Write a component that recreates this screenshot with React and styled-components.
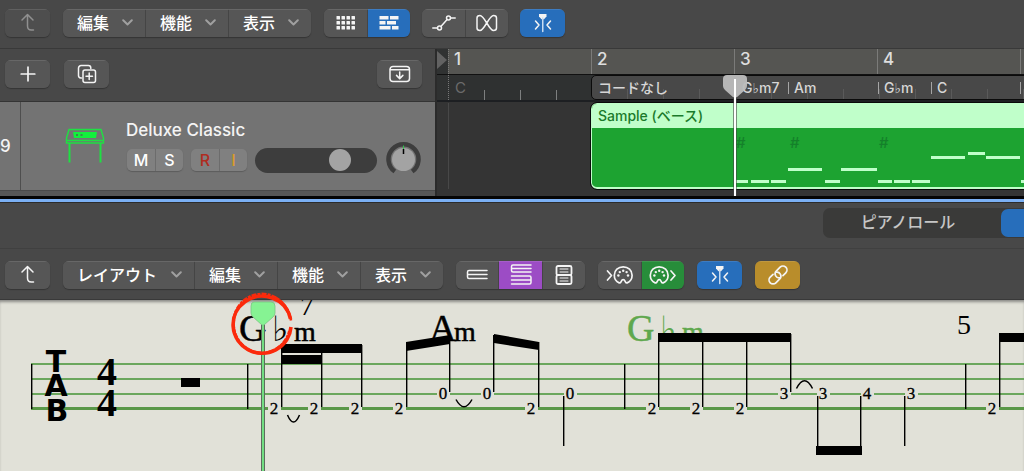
import React from 'react';
import styled, { createGlobalStyle, css } from 'styled-components';

const Global = createGlobalStyle`
  *, *::before, *::after { box-sizing: border-box; }
  body {
    margin: 0;
    background: #484848;
    color: #f4f4f4;
    font-family: Inter, "Noto Sans CJK JP", sans-serif;
  }
  button { font: inherit; color: inherit; border: 0; padding: 0; margin: 0; }
  svg { display: block; }
`;

const TONES = {
  plain: '#565656',
  blue: '#276ebb',
  purple: '#9c4cc5',
  green: '#278d3a',
  gold: '#b98d2b',
};

const Window = styled.main`
  display: flex;
  flex-direction: column;
  min-height: 100vh;
  overflow: hidden;
`;

/* ---------- toolbars ---------- */

const Toolbar = styled.header`
  display: flex;
  align-items: flex-start;
  gap: ${(p) => p.$gap}px;
  height: ${(p) => p.$height}px;
  padding: ${(p) => p.$top}px 5px 0;
  background: #484848;
  border-bottom: 1px solid #393939;
`;

const Group = styled.div`
  display: flex;
  gap: 1px;
  flex: none;
  margin: 0 ${(p) => (p.$spaced ? 1 : 0)}px;
  border-radius: 6px;
  overflow: hidden;
  background: #454545;
  box-shadow: 0 1px 1px #353535, inset 0 1px 0 #636363;
`;

const ToolButton = styled.button`
  display: flex;
  align-items: center;
  justify-content: center;
  width: ${(p) => p.$width || 45}px;
  height: 28px;
  background: ${(p) => TONES[p.$tone || 'plain']};
  box-shadow: inset 0 1px 0 rgba(255, 255, 255, 0.1);
  &:disabled { background: #4e4e4e; color: #909090; }
`;

const MenuButton = styled.button`
  display: flex;
  align-items: center;
  justify-content: space-between;
  width: ${(p) => (p.$wide ? 131 : 82)}px;
  height: 28px;
  padding: 0 12px 2px 14px;
  background: ${TONES.plain};
  box-shadow: inset 0 1px 0 rgba(255, 255, 255, 0.1);
  font-family: "Noto Sans CJK JP", sans-serif;
  font-size: 16px;
  font-weight: 500;
  line-height: 24px;
  color: #fff;
  white-space: nowrap;
`;

function Icon({ w = 24, h = 24, children, sw = 1.5 }) {
  return (
    <svg width={w} height={h} viewBox={`0 0 ${w} ${h}`} fill="none" stroke="currentColor"
      strokeWidth={sw} strokeLinecap="round" strokeLinejoin="round" aria-hidden="true">
      {children}
    </svg>
  );
}

const Chevron = () => (
  <Icon w={11} h={8} sw={2}><path d="M1.2 2.300 5.5 6.500 9.8 2.300" stroke="#a0a0a0" /></Icon>
);

const Menu = ({ label, wide }) => (
  <MenuButton $wide={wide}>{label}<Chevron /></MenuButton>
);

const UpIcon = () => (
  <Icon><path d="M6 9 11.500 3.500l5.500 5.500M11.500 3.700V15q0 4 3.800 4H17.500" /></Icon>
);
const PlusIcon = () => <Icon sw={1.7}><path d="M12 5.2v13.6M5.2 12h13.6" /></Icon>;
const DuplicateIcon = () => (
  <Icon>
    <path d="M6.5 16H5.8A2.4 2.4 0 0 1 3.5 13.6V6.2A2.6 2.6 0 0 1 6.1 3.600h7.300A2.400 2.400 0 0 1 15.800 6v.4" />
    <rect x="8" y="8" width="12.500" height="12.500" rx="2" />
    <path d="M14.200 11v6.500M11 14.200h6.500" />
  </Icon>
);
const DropIcon = () => (
  <Icon>
    <rect x="2" y="4.500" width="19.500" height="15" rx="3" />
    <path d="M2.500 7.800h18.500M11.700 10v6.400M8.500 13.400l3.200 3.200 3.200-3.200" />
  </Icon>
);
const DotsIcon = () => (
  <Icon>
    <g fill="currentColor" stroke="none">
      {[5, 10, 15].flatMap((y) => [2, 7, 12, 17].map((x) => (
        <rect key={`${x}-${y}`} x={x + 0.5} y={y} width="3.500" height="3.500" rx="0.600" />
      )))}
    </g>
  </Icon>
);
const BricksIcon = () => (
  <Icon>
    <g fill="currentColor" stroke="none">
      <rect x="2.500" y="5" width="9" height="3.500" /><rect x="13" y="5" width="8.500" height="3.500" />
      <rect x="2.500" y="10" width="6" height="3.500" /><rect x="10" y="10" width="9" height="3.500" />
      <rect x="2.500" y="15" width="11" height="3.500" /><rect x="15" y="15" width="6.500" height="3.500" />
    </g>
  </Icon>
);
const AutomationIcon = () => (
  <Icon>
    <circle cx="7.500" cy="17" r="2" /><circle cx="16.500" cy="7" r="2" />
    <path d="M.8 17h4.700M8.900 15.500l6.200-7M18.500 7h4.700" />
  </Icon>
);
const FlexIcon = () => (
  <Icon>
    <path d="M5 4.500C9.500 4.500 14 19.500 18.500 19.500 20.500 19.500 21.500 18.500 21.500 17V7C21.500 5.500 20.500 4.500 18.500 4.500 14 4.500 9.500 19.500 5 19.500 3 19.500 2 18.500 2 17V7C2 5.500 3 4.500 5 4.500Z" />
  </Icon>
);
const CatchIcon = () => (
  <Icon>
    <path d="M8 3h7.500v2.600l-2.500 2.600h-2.500L8 5.600Z" fill="currentColor" stroke="none" />
    <path d="M11.750 7v13.500" stroke="#c8dcf2" />
    <path d="m4.500 10 3.500 4-3.500 4M19.500 10 16 14l3.500 4" />
  </Icon>
);
const LinearIcon = () => (
  <Icon><path d="M22 7.500H4Q2.500 7.500 2.500 9V14Q2.500 15.500 4 15.500H22M3 11.500h19" /></Icon>
);
const WrappedIcon = () => (
  <Icon>
    <path d="M22 2H4Q2.500 2 2.500 3.500V7.500Q2.500 9 4 9H22M3 5.500H22M2.500 13H20.500Q22 13 22 14.500V19.500Q22 21 20.500 21H2.500M2.500 17H21.500" />
  </Icon>
);
const PageIcon = () => (
  <Icon sw={1.800}>
    <rect x="4.500" y="3" width="15" height="9" rx="1.500" />
    <rect x="4.500" y="12" width="15" height="9" rx="1.500" />
    <path d="M8 6h8M8 9h8M8 15h8M8 18h8" strokeWidth="1" />
  </Icon>
);
const Midi = () => (
  <>
    <path d="M6.200 19.400C2.800 18 1.300 15 1.300 11.800 1.300 6.800 5.200 3.400 10.200 3.400s8.900 3.400 8.900 8.400c0 3.200-1.500 6.200-4.900 7.600-2.200.7-1.600-3.200-4-3.200s-1.800 3.900-4 3.200Z" />
    <g fill="currentColor" stroke="none">
      <circle cx="5.400" cy="12" r="1.200" /><circle cx="6.800" cy="8.600" r="1.200" />
      <circle cx="10.200" cy="7.200" r="1.200" /><circle cx="13.600" cy="8.600" r="1.200" />
      <circle cx="15" cy="12" r="1.200" />
    </g>
  </>
);
const MidiInIcon = () => (
  <Icon w={28} h={24} sw={1.7}><path d="m1.500 8 4 4.500-4 4.500" /><g transform="translate(7 0.500)"><Midi /></g></Icon>
);
const MidiOutIcon = () => (
  <Icon w={28} h={24} sw={1.7}><g transform="translate(0 0.500)"><Midi /></g><path d="m22 8 4 4.500-4 4.500" /></Icon>
);
const LinkIcon = () => (
  <Icon sw={1.7}>
    <g transform="rotate(-45 12 12)">
      <path d="M12.500 8.600A4 4 0 0 1 10.500 16H5A4 4 0 0 1 5 8H9" />
      <path d="M11.500 15.400A4 4 0 0 1 13.500 8H19A4 4 0 0 1 19 16H15" />
    </g>
  </Icon>
);

/* ---------- track area ---------- */

const Arrange = styled.section`
  display: flex;
  height: 147px;
`;

const TrackPane = styled.div`
  display: flex;
  flex-direction: column;
  flex: none;
  width: 437px;
  border-right: 2px solid #2b2b2b;
`;

const TrackTools = styled.div`
  display: flex;
  gap: 14px;
  height: 53px;
  padding: 11px 13px 0 5px;
  border-bottom: 1px solid #343434;
  & > :last-child { margin-left: auto; }
`;

const TrackRow = styled.div`
  display: flex;
  height: 88px;
  background: #737373;
`;

const TrackNumber = styled.div`
  width: 21px;
  border-right: 1px solid #4e4e4e;
  font-size: 17px;
  font-weight: 500;
  line-height: 88px;
`;

const TrackIcon = styled.div`
  width: 105px;
  padding: 25px 0 0 43px;
`;

const TrackBody = styled.div`
  display: flex;
  flex-direction: column;
  gap: 5px;
  padding-top: 17px;
`;

const TrackName = styled.div`
  font-size: 17px;
  font-weight: 500;
  line-height: 22px;
`;

const Controls = styled.div`
  display: flex;
  align-items: center;
  gap: 8px;
  height: 28px;
`;

const Pair = styled.div`
  display: flex;
  gap: 1px;
  margin-left: 1px;
  border-radius: 5px;
  overflow: hidden;
  background: #6c6c6c;
  box-shadow: 0 1px 1px #5c5c5c;
  & + & { margin-left: 0; }
`;

const TrackToggle = styled.button`
  width: ${(p) => (p.$narrow ? 27 : 28)}px;
  height: 22px;
  background: #808080;
  color: ${(p) => p.$color || '#fff'};
  font-size: 16px;
  font-weight: 500;
  line-height: 22px;
`;

const Volume = styled.input`
  appearance: none;
  width: 122px;
  height: 25px;
  margin: 0;
  border-radius: 13px;
  background: #3d3d3d;
  &::-webkit-slider-thumb {
    appearance: none;
    width: 22px;
    height: 22px;
    border-radius: 50%;
    background: #a3a3a3;
  }
`;

const Pan = styled.label`
  position: relative;
  width: 36px;
  height: 36px;
  input { position: absolute; inset: 0; width: 100%; margin: 0; opacity: 0; }
`;

const PaneEnd = styled.div`
  flex: 1;
  background: #575757;
  border-top: 1px solid #4a4a4a;
`;

const Timeline = styled.div`
  position: relative;
  display: flex;
  flex-direction: column;
  flex: 1;
  min-width: 0;
  overflow: hidden;
  background: #343434;
`;

const Ruler = styled.div`
  display: grid;
  grid-template-columns: 11px repeat(12, 143px);
  height: 26px;
  background: #555552;
  border-bottom: 1px solid #111;
`;

const RulerStart = styled.div`
  background: #303232;
  padding-top: 2px;
`;

const Bar = styled.div`
  padding: 2px 0 0 5px;
  border-left: 1px ${(p) => (p.$first ? 'dotted' : 'solid')} #7b7b79;
  font-size: 17px;
  font-weight: 500;
  line-height: 17px;
  color: #dedede;
`;

const ticks = css`
  background-image: repeating-linear-gradient(90deg, transparent 0 35px, ${(p) => p.$tick} 35px 36px);
  background-size: 100% 10px;
  background-position: 0 100%;
  background-repeat: no-repeat;
`;

const ChordRow = styled.div`
  display: flex;
  height: 27px;
  background: #2f3131;
  border-bottom: 2px solid #1d1f22;
`;

const KeyCell = styled.div`
  ${ticks}
  width: 143px;
  margin-left: 11px;
  padding-left: 6px;
  border-left: 1px dotted #777;
  font-size: 15px;
  line-height: 26px;
  color: #6b6b6b;
`;

const ChordTrack = styled.div`
  ${ticks}
  display: flex;
  flex: 1;
  min-width: 0;
  overflow: hidden;
  margin-right: -6px;
  background-color: #484848;
  border: 1px solid #0b0b0b;
  border-radius: 5px;
`;

const Chord = styled.div`
  flex: none;
  width: ${(p) => p.$width}px;
  padding-left: 6px;
  font-size: 14px;
  font-weight: 500;
  line-height: 23px;
  color: #d6d6d6;
  white-space: nowrap;
  &::before {
    content: "";
    display: ${(p) => (p.$mark ? 'inline-block' : 'none')};
    width: 1px;
    height: 12px;
    margin: 0 5px 0 -6px;
    background: #a5a5a5;
    vertical-align: -1px;
  }
`;

const Flat = styled.span`
  font-family: "DejaVu Sans", sans-serif;
  font-weight: 700;
  line-height: 12px;
`;

const Lane = styled.div`
  display: flex;
  height: 88px;
  padding: 1px 0 1px 11px;
  &::before {
    content: "";
    width: 143px;
    border-left: 1px solid #484848;
  }
`;

const Region = styled.article`
  flex: 1;
  min-width: 0;
  height: 86px;
  margin-right: -6px;
  overflow: hidden;
  background: #1da331;
  border: 1px solid #c0ffca;
  border-bottom-width: 2px;
  border-radius: 6px;
  outline: 1px solid #0a0a0a;
`;

const RegionName = styled.div`
  height: 24px;
  padding-left: 6px;
  background: #c0ffca;
  color: #1b7a2b;
  font-size: 14px;
  font-weight: 500;
  line-height: 24px;
`;

const ArrangePlayhead = styled.div`
  position: absolute;
  left: 286px;
  top: 26px;
  bottom: 0;
`;

const Splitter = styled.div`
  height: 7px;
  background: #7bb0f4;
  border-top: 3px solid #050505;
  border-bottom: 1px solid #2c2c2c;
`;

const NOTES = [
  [144, 78, 12], [159, 78, 18], [179, 78, 15], [196, 66, 34], [233, 78, 15], [249, 66, 36],
  [286, 78, 14], [302, 78, 16], [320, 78, 18], [339, 54, 34], [376, 50, 17], [394, 54, 34], [429, 78, 12],
];

/* ---------- score editor ---------- */

const EditorTabs = styled.nav`
  display: flex;
  justify-content: flex-end;
  height: 46px;
  padding-top: 5px;
  background: #484848;
  border-bottom: 1px solid #404040;
`;

const TabTrack = styled.div`
  display: flex;
  align-items: center;
  width: 201px;
  height: 30px;
  background: #3a3a39;
  border-radius: 7px 0 0 7px;
`;

const Tab = styled.button`
  width: ${(p) => (p.$active ? 23 : 178)}px;
  height: 28px;
  padding: 0 8px 4px 0;
  background: ${(p) => (p.$active ? TONES.blue : 'transparent')};
  border-radius: 7px 0 0 7px;
  color: #c6c6c6;
  font-family: "Noto Sans CJK JP", sans-serif;
  font-size: 16px;
  font-weight: 500;
  line-height: 24px;
`;

const ScorePane = styled.section`
  position: relative;
  flex: 1;
  min-height: 172px;
  background: #e1e1d8;
  border-bottom: 1px solid #bdbdb6;
  box-shadow: inset 0 3px 3px -1px #8b8b87;
`;

const ScoreDrawing = styled.svg`
  width: 100%;
  height: 170px;
`;

const Marker = styled.svg`
  position: absolute;
  left: 225px;
  top: -10px;
  height: calc(100% + 10px);
`;

const FRETS = [
  [274, 1, 2], [314, 1, 2], [355, 1, 2], [399, 1, 2], [443, 0, 0], [487, 0, 0], [531, 1, 2], [570, 0, 0],
  [652, 1, 2], [696, 1, 2], [740, 1, 2], [784, 0, 3], [823, 0, 3], [867, 0, 4], [911, 0, 3], [992, 1, 2],
];

const STEMS = [
  [281, 45, 107], [321, 45, 107], [361, 45, 107], [406, 43, 107], [449, 37, 92], [493, 35, 92],
  [538, 42, 107], [563, 96, 146], [658, 34, 107], [702, 34, 107], [746, 34, 107], [790, 34, 92],
  [817, 96, 150], [860, 96, 150], [904, 96, 146], [999, 34, 107],
];

const serif = '"Liberation Serif", serif';
const sans = '"DejaVu Sans", sans-serif';

function ChordSymbol({ x, root, flat, fill = '#000' }) {
  return (
    <g fill={fill} stroke={fill} strokeWidth="0.500" fontFamily={serif}>
      <text x={x} y="41" fontSize="38">{root}</text>
      {flat && <text x={x + 33} y="41" fontSize="35" fontFamily={sans} stroke="none">♭</text>}
      <text x={x + (flat ? 55 : 25)} y="41" fontSize="28">m</text>
    </g>
  );
}

function Score() {
  return (
    <ScoreDrawing role="img" aria-label="TAB">
      <g fill="#6ba75d">
        <rect x="31" y="63" width="100%" height="2" />
        <rect x="31" y="78" width="100%" height="2" />
        <rect x="31" y="93" width="100%" height="2" />
        <rect x="31" y="107" width="100%" height="3" fill="#5a9848" />
      </g>
      <g fill="#000">
        <rect x="31" y="64" width="1.400" height="45" />
        <rect x="247" y="64" width="1.400" height="45" />
        <rect x="624" y="64" width="1.400" height="45" />
        <rect x="965" y="64" width="1.400" height="45" />
        <rect x="181" y="78" width="19" height="9" />
      </g>
      <g fontFamily={sans} fontWeight="700" fontSize="30" textAnchor="middle">
        <text x="56" y="72">T</text>
        <text x="56" y="96">A</text>
        <text x="57" y="121">B</text>
      </g>
      <g fontFamily={serif} fontWeight="700" fontSize="40" textAnchor="middle">
        <text x="107" y="85">4</text>
        <text x="107" y="116">4</text>
      </g>
      <ChordSymbol x={239} root="G" flat />
      <text x="300" y="15" fontSize="28" fontFamily={serif}>7</text>
      <ChordSymbol x={429} root="A" />
      <ChordSymbol x={627} root="G" flat fill="#5fa84e" />
      <text x="957" y="34" fontSize="28" fontFamily={serif}>5</text>
      {FRETS.map(([x, low, n]) => (
        <g key={x}>
          <rect x={x - 6} y={low ? 102 : 88} width="13" height="12" fill="#e1e1d8" />
          <text x={x} y={low ? 114 : 99} fontSize="17" textAnchor="middle" fontFamily={serif} stroke="#000" strokeWidth="0.300">{n}</text>
        </g>
      ))}
      {STEMS.map(([x, a, b]) => <rect key={x} x={x} y={a} width="1.400" height={b - a} />)}
      <path d="M281 44H362V53H281ZM281 55H322V64H281ZM406 42 450 35V44L406 51ZM494 34 539 42V50L494 43ZM658 33H791V42H658ZM816 146H862V155H816ZM999 33H1099V42H999Z" />
      <g fill="none" stroke="#000" strokeWidth="1.500">
        <path d="M287.500 115Q293.500 129 299.500 115M456 99.500Q464 114 472 99.500M796.500 88.500Q804.500 73 812.500 88.500" />
      </g>
    </ScoreDrawing>
  );
}

export default function App() {
  return (
    <Window>
      <Global />
      <Toolbar $height={49} $top={9} $gap={12}>
        <Group><ToolButton disabled aria-label="上へ"><UpIcon /></ToolButton></Group>
        <Group $spaced>
          <Menu label="編集" /><Menu label="機能" /><Menu label="表示" />
        </Group>
        <Group>
          <ToolButton $width={43} aria-label="グリッド"><DotsIcon /></ToolButton>
          <ToolButton $width={42} $tone="blue" aria-label="トラック"><BricksIcon /></ToolButton>
        </Group>
        <Group>
          <ToolButton $width={43} aria-label="オートメーション"><AutomationIcon /></ToolButton>
          <ToolButton $width={42} aria-label="Flex"><FlexIcon /></ToolButton>
        </Group>
        <Group><ToolButton $tone="blue" aria-label="キャッチ"><CatchIcon /></ToolButton></Group>
      </Toolbar>

      <Arrange>
        <TrackPane>
          <TrackTools>
            <div><Group><ToolButton aria-label="追加"><PlusIcon /></ToolButton></Group></div>
            <div><Group><ToolButton aria-label="複製"><DuplicateIcon /></ToolButton></Group></div>
            <div><Group><ToolButton aria-label="読み込む"><DropIcon /></ToolButton></Group></div>
          </TrackTools>
          <TrackRow>
            <TrackNumber>9</TrackNumber>
            <TrackIcon>
              <svg width="42" height="40" viewBox="0 0 42 40" fill="none" stroke="#1fe043" strokeWidth="1.400" aria-hidden="true">
                <path d="M5 2.500H37L39.500 11V16H2.500V11ZM2.500 13.500H39.500" />
                <path d="M5.500 16V35.500M36.500 16V35.500" strokeWidth="2" />
                <path d="M9 5H33L32 11H10Z" fill="#12f03c" stroke="none" />
                <path d="M12 8h2M16.500 8h2" stroke="#3f8a4d" strokeWidth="2" />
              </svg>
            </TrackIcon>
            <TrackBody>
              <TrackName>Deluxe Classic</TrackName>
              <Controls>
                <Pair>
                  <TrackToggle>M</TrackToggle><TrackToggle $narrow>S</TrackToggle>
                </Pair>
                <Pair>
                  <TrackToggle $color="#b02c20">R</TrackToggle><TrackToggle $narrow $color="#d99b2b">I</TrackToggle>
                </Pair>
                <Volume type="range" min="0" max="100" defaultValue="74" aria-label="音量" />
                <Pan>
                  <input type="range" min="-64" max="63" defaultValue="0" aria-label="パン" />
                  <svg width="36" height="36" viewBox="0 0 36 36" fill="none" aria-hidden="true">
                    <path d="M9.800 29.500A15 15 0 1 1 27.200 29.500" stroke="#3d3d3d" strokeWidth="4.500" />
                    <circle cx="18.500" cy="17.500" r="11.500" fill="#a3a3a3" />
                    <path d="M18.500 7v5" stroke="#000" strokeWidth="1.500" />
                    <path d="M18.500 3.500v3.500" stroke="#2fc04a" />
                  </svg>
                </Pan>
              </Controls>
            </TrackBody>
          </TrackRow>
          <PaneEnd />
        </TrackPane>

        <Timeline>
          <Ruler>
            <RulerStart>
              <svg width="11" height="18" aria-hidden="true"><path d="M0 0 10 9 0 18Z" fill="#626262" /></svg>
            </RulerStart>
            <Bar $first>1</Bar><Bar>2</Bar><Bar>3</Bar><Bar>4</Bar><Bar />
          </Ruler>
          <ChordRow>
            <KeyCell $tick="#7d7f7f">C</KeyCell>
            <ChordTrack $tick="#5a5a5a">
              <Chord $width={144}>コードなし</Chord>
              <Chord $width={52}>G<Flat>♭</Flat>m7</Chord>
              <Chord $width={90} $mark>Am</Chord>
              <Chord $width={53} $mark>G<Flat>♭</Flat>m</Chord>
              <Chord $width={89} $mark>C</Chord>
              <Chord $width={143} $mark />
            </ChordTrack>
          </ChordRow>
          <Lane>
            <Region>
              <RegionName>Sample (ベース)</RegionName>
              <svg width="100%" height="60" aria-hidden="true">
                <g fill="#14802a" fontSize="15" fontWeight="500" fontFamily="Inter, sans-serif">
                  <text x="144" y="20">#</text><text x="198" y="20">#</text><text x="287" y="20">#</text>
                </g>
                <g fill="#c0ffca">
                  {NOTES.map(([x, y, w]) => <rect key={x} x={x} y={y - 26} width={w} height="3" />)}
                </g>
              </svg>
            </Region>
          </Lane>
          <ArrangePlayhead>
            <svg width="24" height="121" viewBox="0 0 24 121" aria-hidden="true">
              <path d="M4 0H20Q24 0 24 4V11Q24 13 22 15L13 23H11L2 15Q0 13 0 11V4Q0 0 4 0Z" fill="#bdbdbd" fillOpacity="0.950" />
              <path d="M10.500 22V121M13.500 22V121" stroke="#444" strokeOpacity="0.600" />
              <path d="M12 4V121" stroke="#fff" strokeWidth="2" />
            </svg>
          </ArrangePlayhead>
        </Timeline>
      </Arrange>
      <Splitter />

      <EditorTabs>
        <TabTrack>
          <Tab>ピアノロール</Tab>
          <Tab $active aria-label="スコア" />
        </TabTrack>
      </EditorTabs>
      <Toolbar $height={51} $top={12} $gap={13}>
        <Group><ToolButton aria-label="上へ"><UpIcon /></ToolButton></Group>
        <Group>
          <Menu label="レイアウト" wide /><Menu label="編集" /><Menu label="機能" /><Menu label="表示" />
        </Group>
        <Group>
          <ToolButton $width={42} aria-label="リニア"><LinearIcon /></ToolButton>
          <ToolButton $width={43} $tone="purple" aria-label="折り返し"><WrappedIcon /></ToolButton>
          <ToolButton $width={42} aria-label="ページ"><PageIcon /></ToolButton>
        </Group>
        <Group>
          <ToolButton $width={43} aria-label="MIDI 入力"><MidiInIcon /></ToolButton>
          <ToolButton $width={42} $tone="green" aria-label="MIDI 出力"><MidiOutIcon /></ToolButton>
        </Group>
        <Group><ToolButton $tone="blue" aria-label="キャッチ"><CatchIcon /></ToolButton></Group>
        <Group><ToolButton $tone="gold" aria-label="リンク"><LinkIcon /></ToolButton></Group>
      </Toolbar>

      <ScorePane>
        <Score />
        <Marker width="76" aria-hidden="true">
          <rect x="36" y="34" width="4" height="100%" fill="#5d6b5d" />
          <rect x="37" y="34" width="2" height="100%" fill="#72dd82" />
          <path d="M29 12H46Q50 12 50 16V23Q50 25 48 27L39 35H37L28 27Q26 25 26 23V16Q26 12 29 12Z" fill="#86f393" stroke="#79c583" strokeWidth="0.800" />
          <g fill="none" stroke="#fb2a0c">
            <path d="M65.500 29A29 28.500 0 1 0 66 37" strokeWidth="3.600" />
            <path d="M63.500 23A28.500 29.500 0 1 0 64.500 41" strokeWidth="3" strokeDasharray="5 1 3 1" />
            <path d="M66 30.500A30 30 0 0 0 50 7.500" strokeWidth="2.500" strokeDasharray="4 1" />
          </g>
        </Marker>
      </ScorePane>
    </Window>
  );
}
